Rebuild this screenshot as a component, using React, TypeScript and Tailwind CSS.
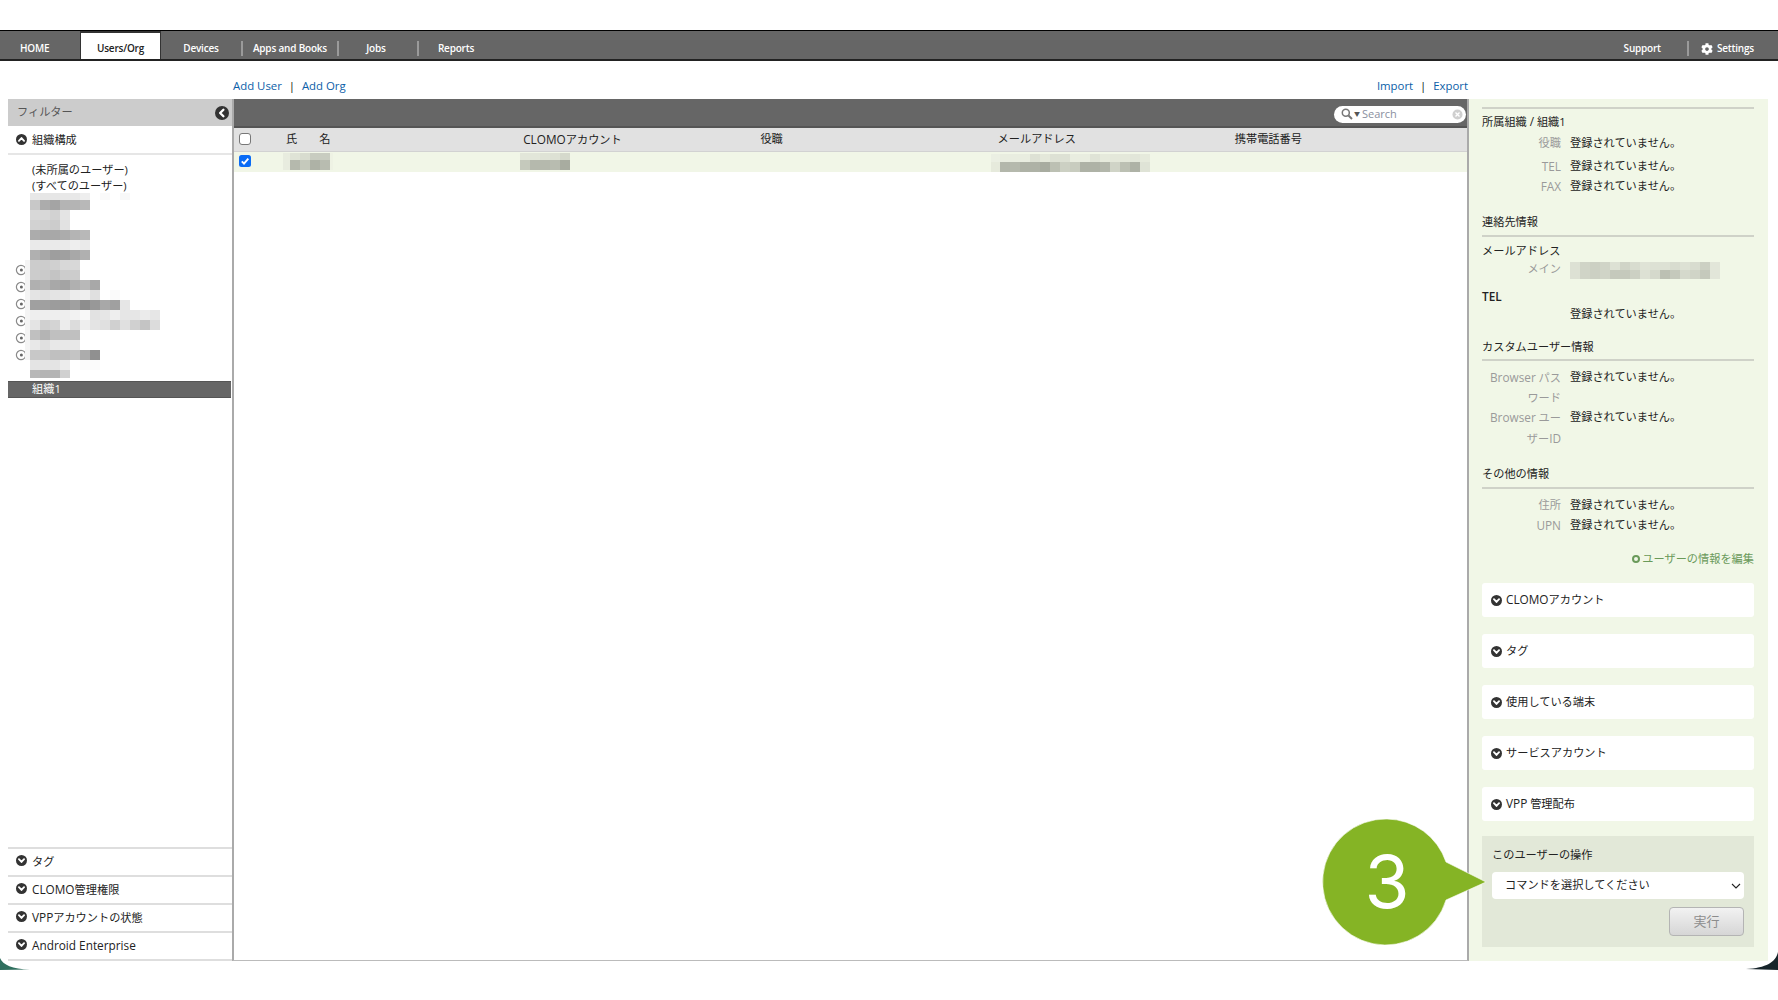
import React from "react";
import { FaCog } from "react-icons/fa";

const FONT = "font-['Open_Sans','Noto_Sans_CJK_JP',sans-serif]";

function L({ children }: { children: React.ReactNode }) {
  return <span className="text-[11.8px]">{children}</span>;
}

function Mosaic({ rows, widths, className = "" }: { rows: { h: number; c: string[] }[]; widths?: number[]; className?: string }) {
  return (
    <div className={"flex flex-col " + className}>
      {rows.map((r, i) => (
        <div key={i} className="flex" style={{ height: r.h }}>
          {r.c.map((c, j) => (
            <div key={j} style={{ width: widths ? widths[j] : 10, background: c }} />
          ))}
        </div>
      ))}
    </div>
  );
}

function Chev({ dir = "down", size = 11 }: { dir?: "down" | "up" | "left"; size?: number }) {
  const d = dir === "down" ? "M3.2 4.6 L6 7.6 L8.8 4.6" : dir === "up" ? "M3.2 7.4 L6 4.4 L8.8 7.4" : "M7.2 3.2 L4.4 6 L7.2 8.8";
  return (
    <svg width={size} height={size} viewBox="0 0 12 12" className="shrink-0">
      <circle cx="6" cy="6" r="6" fill="#333" />
      <path d={d} fill="none" stroke="#fff" strokeWidth="2" strokeLinecap="round" strokeLinejoin="round" />
    </svg>
  );
}

function Bullet() {
  return (
    <svg width="12" height="12" viewBox="0 0 12 12" className="block shrink-0">
      <circle cx="6" cy="6" r="4.6" fill="#fff" stroke="#8a8a8a" strokeWidth="1.2" />
      <circle cx="6.4" cy="6" r="1.5" fill="#666" />
    </svg>
  );
}

const treeRows = [
  { h: 7, c: ["#fff", "#e8e8e8", "#e6e6e6", "#e6e6e6", "#e8e8e8", "#e8e8e8", "#eeeeee", "#fff", "#fafafa", "#fff", "#f8f8f8"] },
  { h: 10, c: ["#fff", "#c8c8c8", "#acacac", "#a4a4a4", "#b4b4b4", "#b4b4b4", "#b8b8b8"] },
  { h: 10, c: ["#fff", "#d8d8d8", "#d8d8d8", "#d2d2d2", "#e4e4e4"] },
  { h: 10, c: ["#fff", "#d2d2d2", "#d0d0d0", "#cccccc", "#e2e2e2"] },
  { h: 10, c: ["#fff", "#acacac", "#a8a8a8", "#a8a8a8", "#acacac", "#b4b4b4", "#b8b8b8"] },
  { h: 10, c: ["#fff", "#eaeaea", "#eaeaea", "#eaeaea", "#eaeaea", "#eeeeee", "#eaeaea"] },
  { h: 10, c: ["#fff", "#b0b0b0", "#a8a8a8", "#9e9e9e", "#a0a0a0", "#a8a8a8", "#b0b0b0"] },
  { h: 10, c: ["#f4f4f4", "#cccccc", "#cccccc", "#d0d0d0", "#d8d8d8", "#d8d8d8"] },
  { h: 10, c: ["#f4f4f4", "#cccccc", "#cacaca", "#c4c4c4", "#cccccc", "#cccccc"] },
  { h: 10, c: ["#f4f4f4", "#b0b0b0", "#b4b4b4", "#a8a8a8", "#a4a4a4", "#b0b0b0", "#b8b8b8", "#a8a8a8"] },
  { h: 10, c: ["#f4f4f4", "#e4e4e4", "#e0e0e0", "#e4e4e4", "#e4e4e4", "#ececec", "#eeeeee", "#e0e0e0", "#fff", "#fafafa"] },
  { h: 10, c: ["#f4f4f4", "#a0a0a0", "#a0a0a0", "#9c9c9c", "#9a9a9a", "#a0a0a0", "#8e8e8e", "#989898", "#a8a8a8", "#a0a0a0", "#e6e6e6"] },
  { h: 10, c: ["#f4f4f4", "#eeeeee", "#eeeeee", "#eeeeee", "#eeeeee", "#f2f2f2", "#f8f8f8", "#e2e2e2", "#e6e6e6", "#eeeeee", "#e6e6e6", "#e6e6e6", "#ebebeb", "#e6e6e6"] },
  { h: 10, c: ["#f4f4f4", "#e4e4e4", "#d0d0d0", "#d4d4d4", "#ececec", "#dcdcdc", "#eeeeee", "#e4e4e4", "#e0e0e0", "#d0d0d0", "#e0e0e0", "#d0d0d0", "#c4c4c4", "#dcdcdc"] },
  { h: 10, c: ["#f4f4f4", "#c0c0c0", "#b4b4b4", "#c0c0c0", "#c0c0c0", "#c0c0c0"] },
  { h: 10, c: ["#f4f4f4", "#e8e8e8", "#e0e0e0", "#e8e8e8", "#e8e8e8", "#e8e8e8"] },
  { h: 10, c: ["#f4f4f4", "#c8c8c8", "#c8c8c8", "#c0c0c0", "#c0c0c0", "#c4c4c4", "#acacac", "#909090"] },
  { h: 10, c: ["#fff", "#e4e4e4", "#e4e4e4", "#e4e4e4", "#ececec", "#fff", "#fbfbfb", "#fbfbfb"] },
  { h: 8, c: ["#fff", "#b8b8b8", "#b4b4b4", "#b4b4b4", "#d0d0d0"] },
];
const treeWidths = [5, 10, 10, 10, 10, 10, 10, 10, 10, 10, 10, 10, 10, 10];

const nameRows = [
  { h: 7, c: ["#e8ecdf", "#dfe3d6", "#d8dccf", "#c8ccc0", "#c8ccc0", "#eef2e4"] },
  { h: 10, c: ["#e8ecdf", "#b5b9ad", "#c5c9bc", "#aeb2a6", "#b8bcb0", "#eef2e4"] },
];
const acctRows = [
  { h: 7, c: ["#e2e6d9", "#e2e6d9", "#dfe3d6", "#dde1d4", "#d5d9cc"] },
  { h: 10, c: ["#c5c9bc", "#b5b9ad", "#b5b9ad", "#b8bcb0", "#a8aca0"] },
];
const mailRows = [
  { h: 8, c: ["#ebefe3", "#e9ede0", "#e9ede0", "#e9ede0", "#dde1d4", "#e4e8da", "#dde1d4", "#dde1d4", "#e9ede0", "#e9ede0", "#dfe3d6", "#e6eadc", "#e4e8da", "#e4e8da", "#e2e6d9", "#e6eadc"] },
  { h: 10, c: ["#e6eadc", "#b3b7ab", "#b5b9ad", "#aeb2a6", "#aeb2a6", "#a8aca0", "#bcc0b3", "#ccd0c3", "#c8ccbf", "#aeb2a6", "#aeb2a6", "#b3b7ab", "#d0d4c7", "#bcc0b3", "#aeb2a6", "#dfe3d6"] },
];
const mainMailRows = [
  { h: 8, c: ["#dde1d4", "#d0d4c7", "#ccd0c3", "#d0d4c7", "#dde1d4", "#d0d4c7", "#d8dccf", "#dfe3d6", "#dde1d4", "#dde1d4", "#d8dccf", "#dde1d4", "#d8dccf", "#ccd0c3", "#e2e6d9"] },
  { h: 10, c: ["#dde1d4", "#d0d4c7", "#ccd0c3", "#d0d4c7", "#c5c9bc", "#c5c9bc", "#ccd0c3", "#dde1d4", "#d5d9cc", "#bcc0b3", "#c5c9bc", "#d5d9cc", "#d0d4c7", "#c5c9bc", "#e2e6d9"] },
];

function Sep() {
  return <div className="w-[2px] h-[15px] bg-[#9a9a9a] shrink-0" />;
}

function TopBar() {
  return (
    <div className="h-[31px] bg-[#666666] border-t border-t-black border-b-2 border-b-[#222] flex items-center pt-[7px] text-[10px] font-semibold tracking-[-0.2px] text-white">
      <div className="w-[80px] pl-[20px]">HOME</div>
      <div className="w-[81px] h-[28px] self-end bg-white text-[#222] border-x border-t-2 border-[#333] flex items-center justify-center pt-[4px]">Users/Org</div>
      <div className="w-[80px] text-center">Devices</div>
      <Sep />
      <div className="w-[94px] text-center">Apps and Books</div>
      <Sep />
      <div className="w-[78px] text-center pr-[4px]">Jobs</div>
      <Sep />
      <div className="w-[74px] text-center">Reports</div>
      <div className="ml-auto flex items-center pr-[24px]">
        <div>Support</div>
        <div className="w-[26px]" />
        <Sep />
        <FaCog className="ml-[12px] mr-[4px] text-[12px]" />
        <div>Settings</div>
      </div>
    </div>
  );
}

function LinkPair({ a, b }: { a: string; b: string }) {
  return (
    <div className="flex items-center text-[11.4px] text-[#0b5ea8]">
      <span>{a}</span>
      <span className="w-[20px] text-center text-[#111]">|</span>
      <span>{b}</span>
    </div>
  );
}

function LeftRow({ label }: { label: React.ReactNode }) {
  return (
    <div className="h-[28px] border-t-2 border-[#dedede] flex items-center text-[11.2px] text-[#222] pl-[8px] gap-[5px]">
      <span className="-mt-[3px]"><Chev /></span>
      <span>{label}</span>
    </div>
  );
}

function LeftPanel() {
  return (
    <div className="w-[224px] h-[862px] flex flex-col bg-white text-[11.2px] text-[#222] border-b-2 border-[#dedede]">
      <div className="h-[27px] bg-[#cccccc] flex items-center justify-between pl-[9px] pr-[3px] text-[#555]">
        <span>フィルター</span>
        <Chev dir="left" size={14} />
      </div>
      <div className="h-[28px] border-b-2 border-[#e6e6e6] flex items-center pl-[8px] gap-[5px] mt-[1px] shrink-0">
        <span className="-mt-[2px]"><Chev dir="up" /></span>
        <span>組織構成</span>
      </div>
      <div className="pt-[6px] pl-[17px]">
        <div className="h-[17px] leading-[17px] pl-[7px]">(未所属のユーザー)</div>
        <div className="h-[15px] leading-[16px] pl-[7px]">(すべてのユーザー)</div>
        <div className="flex -ml-[17px]">
          <div className="w-[17px] pl-[7px] pt-[71px] flex flex-col gap-[5px]">
            {[0, 1, 2, 3, 4, 5].map((i) => (
              <Bullet key={i} />
            ))}
          </div>
          <Mosaic rows={treeRows} widths={treeWidths} />
        </div>
      </div>
      <div className="h-[17px] mt-[3px] bg-[#666666] border-y border-[#555] text-white flex items-center pl-[24px] mr-[1px]">組織1</div>
      <div className="flex-1" />
      <LeftRow label="タグ" />
      <LeftRow label={<><L>CLOMO</L>管理権限</>} />
      <LeftRow label={<><L>VPP</L>アカウントの状態</>} />
      <LeftRow label={<L>Android Enterprise</L>} />
    </div>
  );
}

function Check({ on = false }: { on?: boolean }) {
  return on ? (
    <svg width="12" height="12" viewBox="0 0 12 12" className="block">
      <rect width="12" height="12" rx="2.5" fill="#0a6cf5" />
      <path d="M2.8 6.3 L5 8.6 L9.3 3.6" fill="none" stroke="#fff" strokeWidth="1.9" />
    </svg>
  ) : (
    <svg width="12" height="12" viewBox="0 0 12 12" className="block">
      <rect x=".5" y=".5" width="11" height="11" rx="2.5" fill="#fff" stroke="#777" />
    </svg>
  );
}

function CenterPanel() {
  return (
    <div className="w-[1237px] h-[862px] bg-white border-x-2 border-[#aaaaaa] border-b border-b-[#bbbbbb] flex flex-col text-[11.2px] text-[#222]">
      <div className="h-[29px] bg-[#666666] border-b-2 border-b-[#555] flex items-center justify-end pr-[1px] pt-[3px]">
        <div className="w-[132px] h-[17px] bg-white rounded-full flex items-center pl-[7px] pr-[3px] text-[#8a8fa0] text-[11px]">
          <svg width="12" height="12" viewBox="0 0 12 12" className="shrink-0">
            <circle cx="4.8" cy="4.8" r="3.5" fill="none" stroke="#777" strokeWidth="1.5" />
            <path d="M7.5 7.5 L11 11" stroke="#777" strokeWidth="2" />
          </svg>
          <span className="text-[#555] text-[6px] ml-[1px] mr-[2px]">▼</span>
          <span>Search</span>
          <svg width="11" height="11" viewBox="0 0 11 11" className="ml-auto">
            <circle cx="5.5" cy="5.5" r="5" fill="#cfcfcf" />
            <path d="M3.5 3.5 L7.5 7.5 M7.5 3.5 L3.5 7.5" stroke="#fff" strokeWidth="1.3" />
          </svg>
        </div>
      </div>
      <div className="h-[24px] bg-[#e1e1e1] border-b border-[#d2d2d2] grid grid-cols-[52px_repeat(5,237.2px)] items-center">
        <div className="pl-[5px] -mt-[1px]"><Check /></div>
        <div className="flex gap-[22px]"><span>氏</span><span>名</span></div>
        <div><L>CLOMO</L>アカウント</div>
        <div>役職</div>
        <div>メールアドレス</div>
        <div>携帯電話番号</div>
      </div>
      <div className="h-[20px] bg-[#f1f6e7] grid grid-cols-[52px_repeat(5,237.2px)] items-start">
        <div className="pl-[5px] pt-[3px]"><Check on /></div>
        <Mosaic rows={nameRows} widths={[7, 10, 10, 10, 10, 3]} className="-ml-[3px] pt-[1px]" />
        <Mosaic rows={acctRows} className="-ml-[3px] pt-[1px]" />
        <div />
        <Mosaic rows={mailRows} widths={[9, 10, 10, 10, 10, 10, 10, 10, 10, 10, 10, 10, 10, 10, 10, 10]} className="-ml-[7px] pt-[2px]" />
        <div />
      </div>
    </div>
  );
}

function Field({ label, value, cls = "h-[20px]" }: { label?: React.ReactNode; value?: string; cls?: string }) {
  return (
    <div className={"flex " + cls}>
      <div className="w-[79px] text-right text-[#9a9a9a] leading-[20px]">{label}</div>
      <div className="ml-[9px] leading-[20px] text-[#222]">{value}</div>
    </div>
  );
}

function Title({ text, cls, rule = "mt-[4px]" }: { text: string; cls: string; rule?: string }) {
  return (
    <>
      <div className={"h-[18px] leading-[18px] " + cls}>{text}</div>
      <div className={"border-t-2 border-[#cfd2c8] " + rule} />
    </>
  );
}

function Card({ label, mb = "mb-[17px]" }: { label: React.ReactNode; mb?: string }) {
  return (
    <div className={"h-[34px] bg-white rounded-[3px] flex items-center pl-[9px] gap-[4px] " + mb}>
      <Chev />
      <span>{label}</span>
    </div>
  );
}

const NONE = "登録されていません。";

function RightPanel() {
  return (
    <div className="w-[299px] h-[862px] bg-[#f1f7e7] pl-[13px] pr-[14px] pt-[8px] text-[11.2px] text-[#222]">
      <div className="border-t-2 border-[#cfd2c8]" />
      <div className="h-[18px] leading-[17px] mt-[4px]">所属組織 <L>/</L> 組織1</div>
      <div className="mt-[2px]"><Field label="役職" value={NONE} /></div>
      <div className="mt-[3px]"><Field label={<L>TEL</L>} value={NONE} /></div>
      <Field label={<L>FAX</L>} value={NONE} />
      <Title text="連絡先情報" cls="mt-[17px]" />
      <div className="h-[17px] leading-[18px] mt-[5px]">メールアドレス</div>
      <div className="flex h-[20px]">
        <div className="w-[79px] text-right text-[#9a9a9a] leading-[20px]">メイン</div>
        <Mosaic rows={mainMailRows} className="ml-[9px] pt-[3px]" />
      </div>
      <div className="h-[15px] leading-[15px] mt-[10px] font-semibold"><L>TEL</L></div>
      <Field value={NONE} />
      <Title text="カスタムユーザー情報" cls="mt-[14px]" rule="mt-[3px]" />
      <div className="mt-[6px]">
        <Field cls="h-[40px]" label={<><L>Browser</L> パス<br />ワード</>} value={NONE} />
        <Field cls="h-[40px]" label={<><L>Browser</L> ユー<br />ザー<L>ID</L></>} value={NONE} />
      </div>
      <Title text="その他の情報" cls="mt-[18px]" />
      <div className="mt-[6px]"><Field label="住所" value={NONE} /></div>
      <Field label={<L>UPN</L>} value={NONE} />
      <div className="mt-[16px] h-[16px] flex items-center justify-end gap-[2px] text-[#6a9a5a]">
        <svg width="8" height="8" viewBox="0 0 8 8">
          <circle cx="4" cy="4" r="3" fill="none" stroke="#6a9a5a" strokeWidth="2" />
        </svg>
        <span>ユーザーの情報を編集</span>
      </div>
      <div className="mt-[16px]">
        <Card label={<><L>CLOMO</L>アカウント</>} />
        <Card label="タグ" />
        <Card label="使用している端末" />
        <Card label="サービスアカウント" />
        <Card label={<><L>VPP</L> 管理配布</>} mb="mb-[15px]" />
      </div>
      <div className="h-[111px] bg-[#e2e8d8] px-[10px] pt-[10px] flex flex-col">
        <div className="h-[18px] leading-[18px]">このユーザーの操作</div>
        <div className="relative mt-[8px]">
          <select className={"w-full h-[27px] bg-white rounded-[4px] appearance-none pl-[13px] text-[11.2px] text-[#222] outline-none " + FONT} defaultValue="a">
            <option value="a">コマンドを選択してください</option>
          </select>
          <svg width="10" height="6" viewBox="0 0 10 6" className="absolute right-[3px] top-[11px]">
            <path d="M1 1 L5 5 L9 1" fill="none" stroke="#222" strokeWidth="1.1" />
          </svg>
        </div>
        <div className="flex justify-end mt-[8px]">
          <div className="w-[75px] h-[29px] rounded-[4px] border border-[#b4b4b4] bg-gradient-to-b from-[#f2f2f2] to-[#d6d6d6] flex items-center justify-center text-[#8c8c8c] text-[13px]">
            実行
          </div>
        </div>
      </div>
    </div>
  );
}

function Callout() {
  return (
    <div className="absolute left-[1321px] top-[815px] w-[170px] h-[134px]">
      <svg width="170" height="134" viewBox="0 0 170 134" className="absolute inset-0">
        <path
          d="M66 4 A63 63 0 0 1 125 47 L165 67 L125 85 A63 63 0 1 1 66 4 Z"
          fill="#85b425"
          stroke="#ffffff"
          strokeOpacity="0.6"
          strokeWidth="1"
        />
      </svg>
      <span className="absolute left-[2px] top-0 w-[128px] h-[134px] leading-[134px] text-center text-white text-[73px] font-['Inter',sans-serif]">3</span>
    </div>
  );
}

export default function App() {
  return (
    <div className={"relative w-full h-[1000px] overflow-hidden bg-white " + FONT}>
      <div className="h-[30px]" />
      <TopBar />
      <div className="h-[38px] pl-[233px] pr-[310px] pt-[16px] flex justify-between items-start">
        <LinkPair a="Add User" b="Add Org" />
        <LinkPair a="Import" b="Export" />
      </div>
      <div className="flex pl-[8px]">
        <LeftPanel />
        <CenterPanel />
        <RightPanel />
      </div>
      <Callout />
      <svg width="30" height="14" viewBox="0 0 30 14" className="absolute left-0 top-[958px]">
        <path d="M0 0 C3 7 12 11 30 11.5 L0 12 Z" fill="#2f6f5e" />
      </svg>
      <svg width="32" height="20" viewBox="0 0 32 20" className="absolute left-[1746px] top-[952px]">
        <path d="M32 0 C30 10 20 16 0 17 L32 18 Z" fill="#16242a" />
      </svg>
    </div>
  );
}
